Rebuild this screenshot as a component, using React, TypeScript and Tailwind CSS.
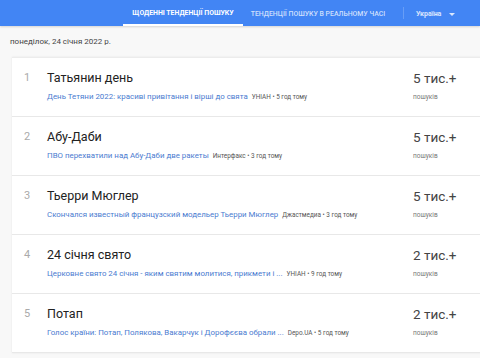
import React from 'react';

type Trend = {
  rank: number;
  title: string;
  article: string;
  source: string;
  ago: string;
  count: string;
};

const trends: Trend[] = [
  { rank: 1, title: 'Татьянин день', article: 'День Тетяни 2022: красиві привітання і вірші до свята', source: 'УНІАН', ago: '5 год тому', count: '5 тис.+' },
  { rank: 2, title: 'Абу-Даби', article: 'ПВО перехватили над Абу-Даби две ракеты', source: 'Интерфакс', ago: '3 год тому', count: '5 тис.+' },
  { rank: 3, title: 'Тьерри Мюглер', article: 'Скончался известный французский модельер Тьерри Мюглер', source: 'Джастмедиа', ago: '3 год тому', count: '5 тис.+' },
  { rank: 4, title: '24 січня свято', article: 'Церковне свято 24 січня - яким святим молитися, прикмети і ...', source: 'УНІАН', ago: '9 год тому', count: '2 тис.+' },
  { rank: 5, title: 'Потап', article: 'Голос країни: Потап, Полякова, Вакарчук і Дорофєєва обрали ...', source: 'Depo.UA', ago: '5 год тому', count: '2 тис.+' },
];

const TrendRow: React.FC<{ item: Trend }> = ({ item }) => (
  <div className="flex h-[59px] border-b border-[#e8e8e8]">
    {/* номер */}
    <div className="w-[35px] pl-[12px] pt-[12px] text-[11px] leading-[16px] text-[#aaa]">{item.rank}</div>
    <div className="w-[366px] pt-[12px]">
      <div className="text-[12.5px] leading-[16px] text-[#222]">{item.title}</div>
      <div className="mt-[5px] flex items-center gap-[4px] whitespace-nowrap leading-[12px]">
        <span className="text-[7.9px] text-[#4a7bd0]">{item.article}</span>
        <span className="text-[6.4px] text-[#555]">
          {item.source} • {item.ago}
        </span>
      </div>
    </div>
    <div className="pt-[12px]">
      <div className="text-[13.5px] leading-[16px] text-[#444]">{item.count}</div>
      <div className="mt-[5px] text-[6.5px] leading-[12px] text-[#777]">пошуків</div>
    </div>
  </div>
);

const App: React.FC = () => {
  return (
    <div className="h-[358px] w-[480px] overflow-hidden bg-[#f8f8f8]" style={{ fontFamily: 'Roboto, "Noto Sans", sans-serif' }}>
      {/* шапка */}
      <div className="flex h-[26px] items-stretch bg-[#4285f4] shadow-[0_1px_2px_rgba(0,0,0,0.15)]">
        <div className="w-[123px]" />
        <div className="flex w-[120px] items-center justify-center border-b-2 border-white pt-[2px] text-[6.9px] font-bold uppercase text-white">
          Щоденні тенденції пошуку
        </div>
        <div className="flex w-[150px] items-center justify-center pt-[2px] text-[6.9px] font-medium uppercase text-white/75">
          Тенденції пошуку в реальному часі
        </div>
        <div className="my-[7px] ml-[10px] w-px bg-white/20" />
        <div className="ml-[12px] flex items-center gap-[8px] pt-[2px] text-[7px] font-bold text-white/80">
          <span>Україна</span>
          <span className="h-0 w-0 border-x-[3px] border-t-[3px] border-x-transparent border-t-white/80" />
        </div>
      </div>

      <div className="pl-[10px] pt-[11px] text-[8px] leading-[10px] text-[#444]">понеділок, 24 січня 2022 р.</div>

      <div className="ml-[12px] mt-[10px] w-[480px] border-t border-[#ececec] bg-white shadow-[0_0_2px_rgba(0,0,0,0.08)]">
        {trends.map((t) => (
          <TrendRow key={t.rank} item={t} />
        ))}
      </div>
    </div>
  );
};

export default App;
